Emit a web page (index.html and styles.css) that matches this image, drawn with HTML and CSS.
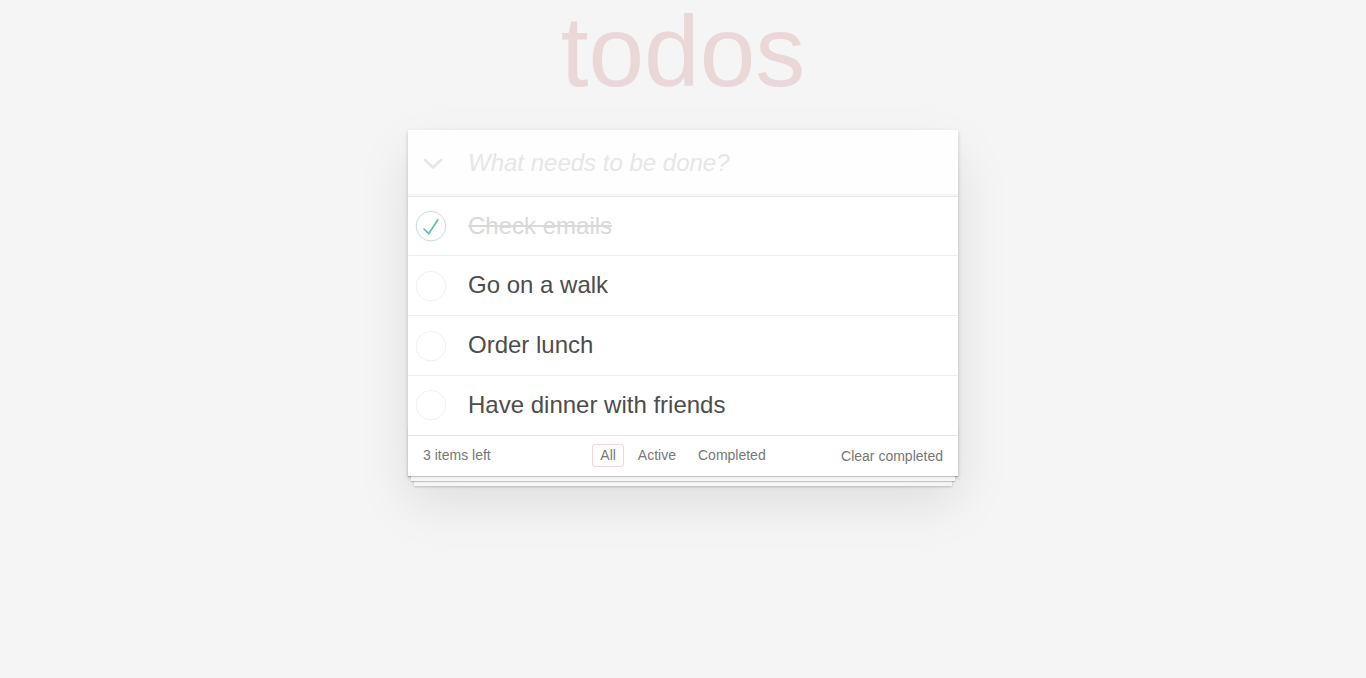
FILE: index.html
```html
<!DOCTYPE html>
<html lang="en">
<head>
    <meta charset="utf-8">
    <title>Todos</title>
    <link rel="stylesheet" href="styles.css">
</head>
<body>
    <div class="page">
        <h1 class="title">todos</h1>
        <section class="todoapp">
            <header class="header">
                <svg class="toggle-all" width="20" height="12" viewBox="0 0 20 12">
                    <path d="M2 2 L10 9.5 L18 2" fill="none" stroke="#e6e6e6" stroke-width="2.6" stroke-linecap="round" stroke-linejoin="round"/>
                </svg>
                <input class="new-todo" type="text" placeholder="What needs to be done?">
            </header>
            <ul class="todo-list">
                <li class="completed">
                    <svg class="toggle" width="40" height="40" viewBox="-10 -18 100 135">
                        <circle cx="50" cy="50" r="50" fill="none" stroke="#bddad5" stroke-width="3"/>
                        <path fill="#5dc2af" d="M72 25L42 71 27 56l-4 4 20 20 34-52z"/>
                    </svg>
                    <label>Check emails</label>
                </li>
                <li>
                    <svg class="toggle" width="40" height="40" viewBox="-10 -18 100 135">
                        <circle cx="50" cy="50" r="50" fill="none" stroke="#ededed" stroke-width="3"/>
                    </svg>
                    <label>Go on a walk</label>
                </li>
                <li>
                    <svg class="toggle" width="40" height="40" viewBox="-10 -18 100 135">
                        <circle cx="50" cy="50" r="50" fill="none" stroke="#ededed" stroke-width="3"/>
                    </svg>
                    <label>Order lunch</label>
                </li>
                <li>
                    <svg class="toggle" width="40" height="40" viewBox="-10 -18 100 135">
                        <circle cx="50" cy="50" r="50" fill="none" stroke="#ededed" stroke-width="3"/>
                    </svg>
                    <label>Have dinner with friends</label>
                </li>
            </ul>
            <footer class="footer">
                <span class="todo-count"><strong>3</strong> items left</span>
                <ul class="filters">
                    <li><a class="selected" href="#/">All</a></li>
                    <li><a href="#/active">Active</a></li>
                    <li><a href="#/completed">Completed</a></li>
                </ul>
                <button class="clear-completed">Clear completed</button>
            </footer>
        </section>
    </div>
</body>
</html>
```

FILE: styles.css
```css
html,
body {
    margin: 0;
    padding: 0;
}

body {
    min-height: 100vh;
    font: 14px "Liberation Sans", Arial, sans-serif;
    line-height: 1.4em;
    background: #f5f5f5;
    color: #4d4d4d;
    font-weight: 300;
}

.page {
    width: 550px;
    margin: 0 auto;
    padding-bottom: 40px;
}

.title {
    margin: 0 0 27px;
    font-size: 100px;
    line-height: 103px;
    font-weight: 100;
    text-align: center;
    color: rgba(175, 47, 47, 0.15);
}

.todoapp {
    position: relative;
    background: #fff;
    box-shadow: 0 2px 4px 0 rgba(0, 0, 0, 0.2),
                0 25px 50px 0 rgba(0, 0, 0, 0.1);
}

.header {
    position: relative;
}

.toggle-all {
    position: absolute;
    left: 15px;
    top: 28px;
}

.new-todo {
    display: block;
    width: 100%;
    box-sizing: border-box;
    margin: 0;
    padding: 16px 16px 16px 60px;
    border: none;
    outline: none;
    font-family: inherit;
    font-size: 24px;
    line-height: 1.4em;
    color: inherit;
    background: rgba(0, 0, 0, 0.003);
    box-shadow: inset 0 -2px 1px rgba(0, 0, 0, 0.03);
}

.new-todo::placeholder {
    font-style: italic;
    font-weight: 300;
    color: #e6e6e6;
}

.todo-list {
    margin: 0;
    padding: 0;
    list-style: none;
    border-top: 1px solid #e6e6e6;
}

.todo-list li {
    display: flex;
    align-items: center;
    font-size: 24px;
    border-bottom: 1px solid #ededed;
}

.todo-list li:last-child {
    border-bottom: none;
}

.todo-list .toggle {
    flex: none;
    width: 40px;
    height: 40px;
}

.todo-list label {
    padding: 15px 15px 15px 20px;
    line-height: 1.2;
    word-break: break-all;
}

.todo-list li.completed label {
    color: #d9d9d9;
    text-decoration: line-through;
}

.footer {
    display: grid;
    grid-template-columns: 1fr auto 1fr;
    align-items: start;
    height: 20px;
    padding: 9px 15px 11px;
    line-height: 20px;
    color: #777;
    border-top: 1px solid #e6e6e6;
    position: relative;
}

/* stacked sheets under the card */
.footer::before {
    content: "";
    position: absolute;
    left: 0;
    right: 0;
    bottom: 0;
    height: 50px;
    overflow: hidden;
    pointer-events: none;
    box-shadow: 0 1px 1px rgba(0, 0, 0, 0.2),
                0 8px 0 -3px #f6f6f6,
                0 9px 1px -3px rgba(0, 0, 0, 0.2),
                0 16px 0 -6px #f6f6f6,
                0 17px 2px -6px rgba(0, 0, 0, 0.2);
}

.todo-count strong {
    font-weight: 300;
}

.filters {
    margin: -1px 0 0;
    padding: 0;
    list-style: none;
    display: flex;
}

.filters a {
    display: inline-block;
    color: inherit;
    margin: 0 3px;
    padding: 3px 7px;
    line-height: 15px;
    text-decoration: none;
    border: 1px solid transparent;
    border-radius: 3px;
}

.filters a.selected {
    border-color: rgba(175, 47, 47, 0.2);
}

.clear-completed {
    justify-self: end;
    margin: 1px 0 0;
    padding: 0;
    border: 0;
    background: none;
    font: inherit;
    color: inherit;
    line-height: 20px;
}
```
